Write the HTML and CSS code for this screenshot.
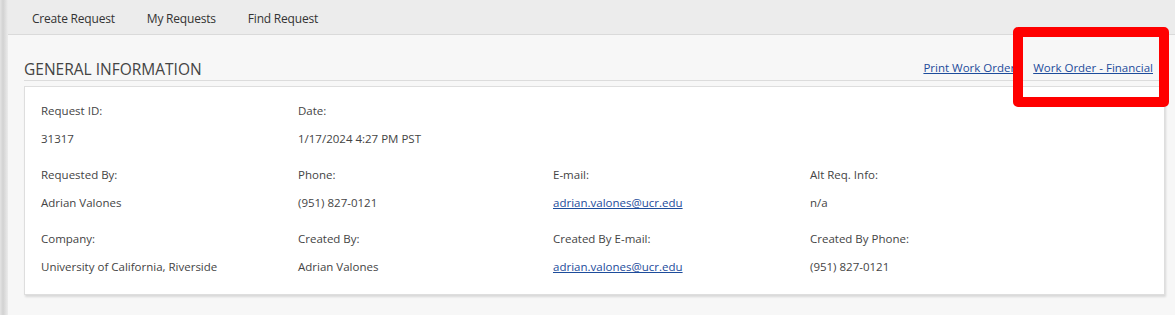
FILE: index.html
```html
<!DOCTYPE html>
<html lang="en">
<head>
<meta charset="utf-8">
<title>Work Order</title>
<link rel="stylesheet" href="styles.css">
</head>
<body>
<div class="shell">
  <div class="edge"></div>
  <div class="main">
    <nav class="tabs">
      <a class="tab">Create Request</a>
      <a class="tab">My Requests</a>
      <a class="tab">Find Request</a>
    </nav>
    <div class="content">
      <div class="section-head">
        <h2 class="title">GENERAL INFORMATION</h2>
        <div class="actions">
          <a class="link" href="#">Print Work Order</a>
          <a class="link" href="#">Work Order - Financial</a>
        </div>
      </div>
      <div class="card">
        <div class="field"><div class="label">Request ID:</div><div class="value">31317</div></div>
        <div class="field"><div class="label">Date:</div><div class="value">1/17/2024 4:27 PM PST</div></div>
        <div class="field"></div>
        <div class="field"></div>
        <div class="field"><div class="label">Requested By:</div><div class="value">Adrian Valones</div></div>
        <div class="field"><div class="label">Phone:</div><div class="value">(951) 827-0121</div></div>
        <div class="field"><div class="label">E-mail:</div><div class="value"><a class="link" href="#">adrian.valones@ucr.edu</a></div></div>
        <div class="field"><div class="label">Alt Req. Info:</div><div class="value">n/a</div></div>
        <div class="field"><div class="label">Company:</div><div class="value">University of California, Riverside</div></div>
        <div class="field"><div class="label">Created By:</div><div class="value">Adrian Valones</div></div>
        <div class="field"><div class="label">Created By E-mail:</div><div class="value"><a class="link" href="#">adrian.valones@ucr.edu</a></div></div>
        <div class="field"><div class="label">Created By Phone:</div><div class="value">(951) 827-0121</div></div>
      </div>
    </div>
  </div>
  <div class="highlight"></div>
</div>
</body>
</html>
```

FILE: styles.css
```css
* { box-sizing: border-box; }
html, body { margin: 0; padding: 0; }
body {
  font-family: "Open Sans", "Noto Sans", sans-serif;
  color: #444;
  background: #f7f7f7;
}
.shell {
  position: relative;
  display: flex;
  min-height: 315px;
}
.edge {
  width: 8px;
  flex: none;
  background: linear-gradient(to right, #e4e4e4 0px, #d2d2d2 3px, #dcdcdc 5px, #ececec 8px);
}
.main {
  flex: 1;
  display: flex;
  flex-direction: column;
}
.tabs {
  height: 35px;
  background: #ececec;
  border-bottom: 1px solid #dadada;
  display: flex;
  align-items: center;
  padding-left: 8px;
  padding-top: 2px;
}
.tab {
  font-size: 12px;
  color: #333;
  padding: 0 16px;
  letter-spacing: -0.2px;
}
.content {
  padding: 0 10px 0 16px;
}
.section-head {
  display: flex;
  justify-content: space-between;
  align-items: flex-end;
  border-bottom: 1px solid #dcdcdc;
  height: 46px;
  padding-bottom: 1px;
  margin-right: 5px;
}
.title {
  margin: 0;
  font-weight: normal;
  font-size: 15.5px;
  color: #444;
  line-height: 20px;
}
.actions {
  display: flex;
  gap: 18px;
  padding-right: 7px;
  line-height: 20px;
  padding-bottom: 1px;
}
.link {
  font-size: 11.5px;
  color: #1d4c9b;
  text-decoration: underline;
}
.card {
  margin-top: 5px;
  background: #fff;
  border: 1px solid #dedede;
  box-shadow: 1px 2px 2px rgba(0,0,0,0.12);
  display: grid;
  grid-template-columns: 257px 255px 257px 1fr;
  row-gap: 16px;
  padding: 14px 16px 17px 16px;
}
.field {
  display: flex;
  flex-direction: column;
  gap: 8px;
  min-height: 48px;
}
.label, .value {
  font-size: 11.5px;
  line-height: 20px;
  color: #444;
}
.value .link { font-size: 11.5px; }
.highlight {
  position: absolute;
  left: 1013px;
  top: 27px;
  width: 156px;
  height: 80px;
  border: 10px solid #ff0000;
  border-radius: 5px;
}
```
